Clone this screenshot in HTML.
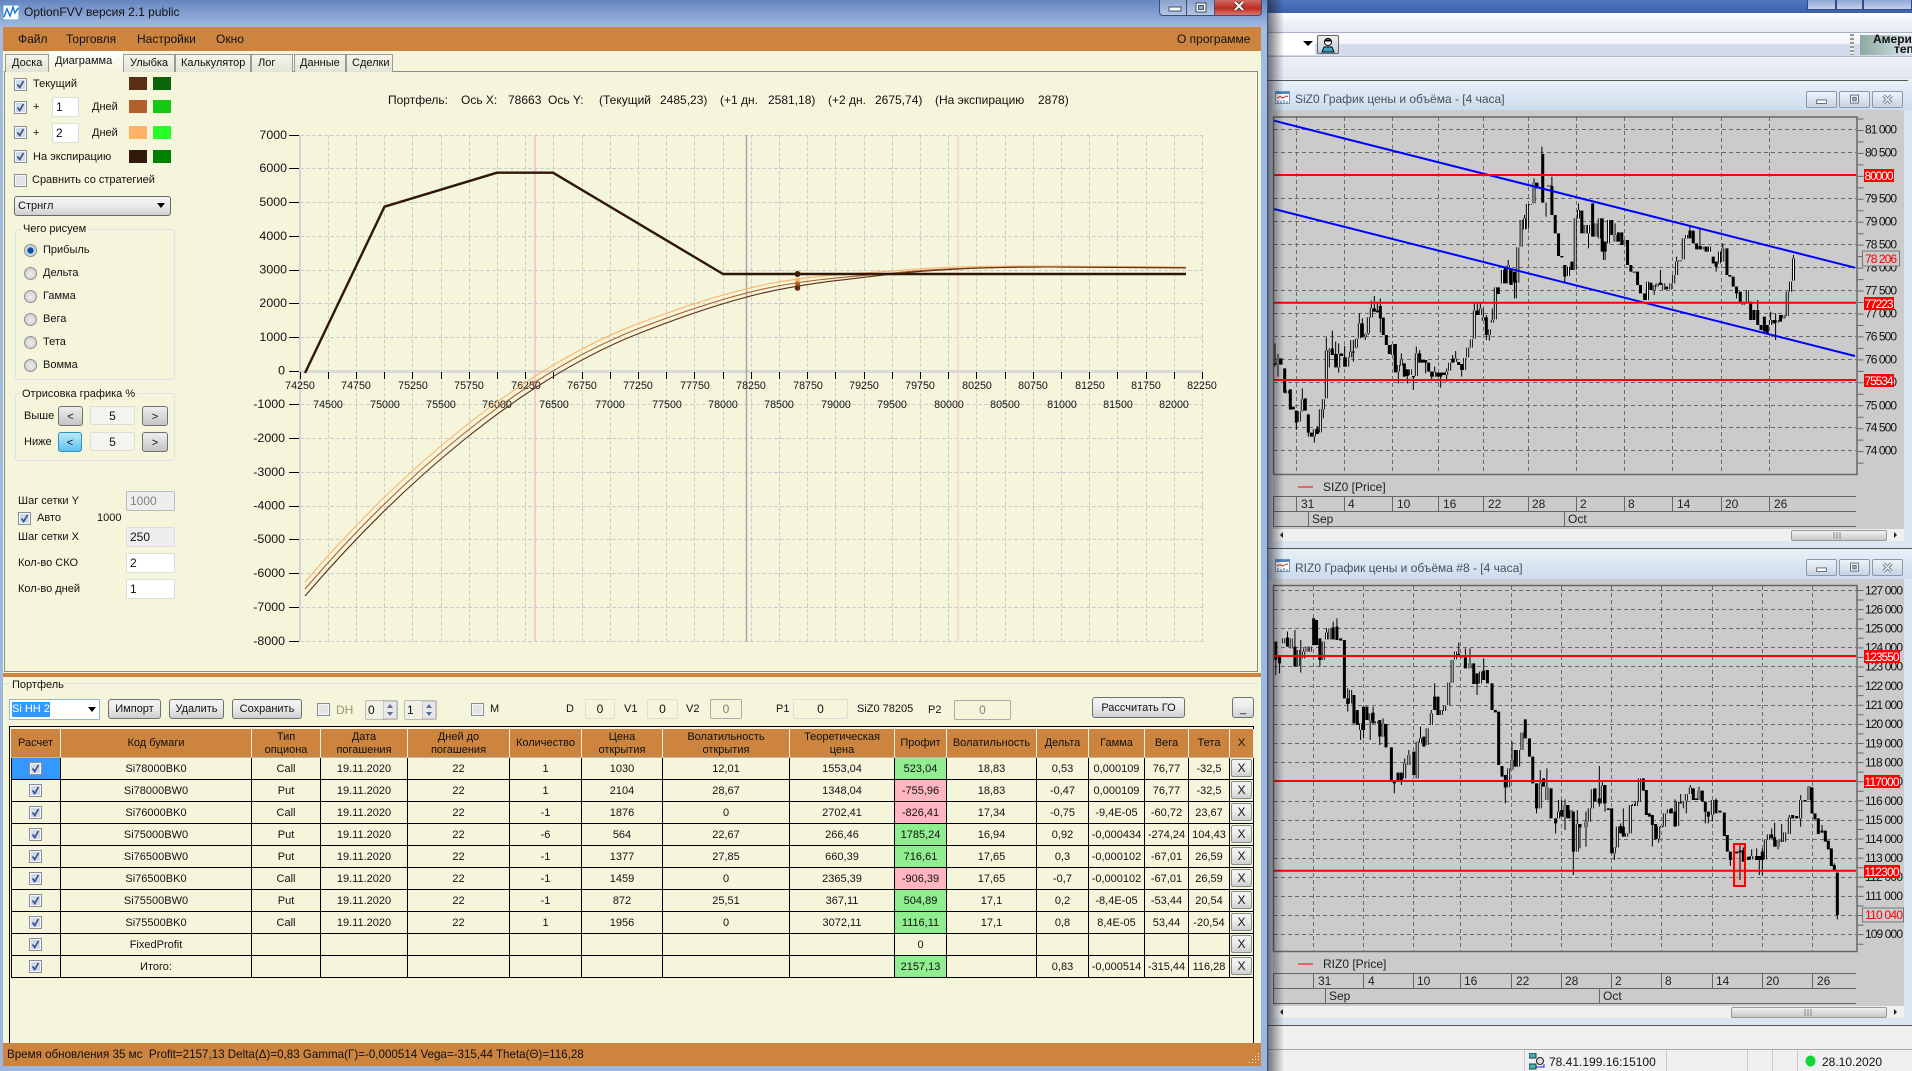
<!DOCTYPE html>
<html lang="ru"><head><meta charset="utf-8"><title>OptionFVV</title>
<style>
html,body{margin:0;padding:0;background:#e8ecf4}
body{width:1912px;height:1071px;position:relative;overflow:hidden;font:11px/14px "Liberation Sans","Noto Sans CJK SC",sans-serif;color:#111}
div,span,svg.p{position:absolute}
.t{position:absolute;white-space:pre;line-height:14px}
.m{font-size:12px}
.tab{position:absolute;top:54px;line-height:16px;text-align:left;background:linear-gradient(#f4f4ea,#e4e4d6);border:1px solid #9a9a9a;border-bottom:0;box-sizing:border-box;height:18px;font-size:11px;padding-left:6px;white-space:pre}
.cb{position:absolute;width:13px;height:13px}
.sw{position:absolute;width:18px;height:13px}
.r{position:absolute;width:11px;height:11px;border-radius:50%;border:1px solid #8e8e8e;background:radial-gradient(circle at 50% 55%,#eee,#c6c6c6)}
.r.on{background:radial-gradient(circle,#0f4f9c 0 2.6px,#9fc4e6 3.4px,#ddd 4.5px,#c8c8c8)}
.in{position:absolute;box-sizing:border-box;height:20px;background:#fff;border:1px solid #dcdcd8;border-radius:2px;padding-left:3px;line-height:18px;font-size:12px}
.in.c{text-align:center;padding:0}
.bt{position:absolute;box-sizing:border-box;background:linear-gradient(#f4f4f4 0,#ececec 45%,#cfcfcf 100%);border:1px solid #707070;border-radius:3px;text-align:center;font-size:11px}
.grp{position:absolute;box-sizing:border-box;border:1px solid #dde2e6;border-radius:3px}
.lg{position:absolute;background:#f5f5dc;padding:0 2px;white-space:pre;line-height:14px}
table{border-collapse:separate;border-spacing:0;table-layout:fixed;position:absolute;left:11px;top:729px;width:1243px;font-size:11px;text-align:center}
th{background:#cc843f;font-weight:400;height:27px;padding:1px 0 0;box-sizing:content-box;line-height:13px;border-right:1px solid #f3efe0;border-bottom:1px solid #b9b9a8;font-size:11px}
td{height:21px;padding:0;border-right:1px solid #000;border-bottom:1px solid #000;line-height:20px;position:relative;white-space:nowrap;overflow:hidden}
tr td:first-child{border-left:1px solid #000}
.g{background:#90ee90}.k{background:#ffb6c1}
.cc svg{position:absolute;left:17px;top:4px;width:13px;height:13px}
.xb{position:absolute;left:1px;top:1px;width:21px;height:18px;box-sizing:border-box;line-height:16px;background:linear-gradient(#f4f4f4,#ececec 45%,#cfcfcf);border:1px solid #8a8a8a;border-radius:2px;font-size:12px}
.wb{position:absolute;box-sizing:border-box;width:31px;height:17px;background:linear-gradient(#eef3f9,#c6d4e5);border:1px solid #8b98aa;border-radius:2px}
.wb svg{position:absolute;left:0;top:0}
.wt{position:absolute;white-space:pre;font-size:12px;color:#46505e;line-height:14px}
svg text{font-family:"Liberation Sans",sans-serif}
.vs{vector-effect:non-scaling-stroke}
</style></head><body>
<svg width="0" height="0" style="position:absolute"><defs>
<symbol id="ck" viewBox="0 0 13 13"><rect x=".5" y=".5" width="12" height="12" fill="#f4f6f9" stroke="#8a8e94"/><rect x="2" y="2" width="9" height="9" fill="#cfd9e8"/><path d="M3.5 6.5l2.2 3 3.8-6.5" fill="none" stroke="#39508f" stroke-width="1.7"/></symbol>
<symbol id="ce" viewBox="0 0 13 13"><rect x=".5" y=".5" width="12" height="12" fill="#f4f6f9" stroke="#8a8e94"/><rect x="2" y="2" width="9" height="9" fill="#e2e4e6"/></symbol>
<symbol id="mn" viewBox="0 0 31 17"><rect x="10" y="9" width="11" height="4" fill="#fff" stroke="#55606e"/></symbol>
<symbol id="mx" viewBox="0 0 31 17"><rect x="11" y="3.5" width="9" height="9" fill="#fff" stroke="#55606e"/><rect x="13.5" y="6" width="4" height="4" fill="#9fb0c4" stroke="#55606e"/></symbol>
<symbol id="cl" viewBox="0 0 31 17"><path d="M11 4l9 9M20 4l-9 9" stroke="#55606e" stroke-width="3.4"/><path d="M11 4l9 9M20 4l-9 9" stroke="#fff" stroke-width="1.6"/></symbol>
<symbol id="wi" viewBox="0 0 15 13"><rect x=".5" y=".5" width="14" height="12" fill="#fff" stroke="#6f93bb"/><rect x="1" y="1" width="13" height="2" fill="#4f86c0"/><path d="M2 7l3-1.5 3 1.5 3-2 2 .5" fill="none" stroke="#d03030"/><path d="M3 12V9M6 12V10M9 12V9M12 12V10" stroke="#3f6f9f"/></symbol>
<path id="w1" class="vs" d="M24 235V252M52 332V340M88 394V425M97 358V392M133 448V470M151 388V457M160 358V388M169 212V355M178 212V215M206 222V262M233 232V260M242 215V232M259 177V203M268 130V175M286 163V170M295 112V160M304 85V112M367 193V225M385 255V275M394 238V257M421 268V285M439 220V288M494 275V290M530 275V285M539 248V272M557 236V246M584 234V270M593 203V232M604 178V203M613 92V176M631 85V105M640 112V122M658 148V165M667 120V128M676 22V118"/>
<path id="w2" class="vs" d="M583 810V850M597 795V850M620 742V848M628 660V740M636 655V688M643 612V686M650 612V615M659 548V610M695 555V560M742 800V828M758 655V810M766 630V655M782 675V700M790 675V700M808 670V710M816 655V715M838 660V730M854 705V725M878 720V735M932 845V900M948 855V870M955 850V860M971 850V870M988 850V868M995 825V850M1002 785V825M1010 780V785M1018 715V778M1026 705V715M1065 740V748M1081 740V755M1105 755V790M1113 745V785M1162 905V915M1172 870V905M1228 960V975M1244 960V968M1260 945V955M1268 875V948M1276 845V875M1283 775V842"/>
<path id="w3" class="vs" d="M57 265V280M75 265V295M92 300V348M105 305V325M113 290V305M121 290V305M152 275V330M160 248V268M168 235V268M218 420V460M242 520V540M265 490V512M280 515V520M296 520V560M348 640V685M358 615V645M378 575V685M386 565V578M402 535V585M412 490V525M436 480V495M444 468V483M454 398V465M462 330V398M470 305V328M505 340V355M530 365V400M598 655V712M606 630V660M622 600V650M630 548V600M674 700V775M690 712V750M718 785V805"/>
<path id="w4" class="vs" d="M15 255V292M33 270V295M52 312V395M78 305V322M88 265V305M97 208V265M127 198V250M163 382V400M172 320V382M200 340V350M211 255V340M220 252V258M229 243V258M238 175V245M296 320V355M304 318V322M313 280V320M325 268V280M353 245V318M379 222V242M391 202V222M417 212V240M457 240V285M575 408V418M616 360V418M625 343V360M654 360V380M674 337V365M688 292V342M722 240V295M747 200V240"/>
</defs></svg>

<!-- right application background -->
<div style="left:1262px;top:0;width:650px;height:1071px;background:#f0f0f0"></div>
<div style="left:1262px;top:0;width:650px;height:13px;background:linear-gradient(#5478bf,#3a60ad)"></div>
<div style="left:1262px;top:13px;width:650px;height:19px;background:linear-gradient(#fff 0,#f4f6fa 30%,#e4e8f3)"></div>
<div style="left:1262px;top:32px;width:650px;height:1px;background:#a9afc2"></div>
<div style="left:1262px;top:33px;width:650px;height:23px;background:linear-gradient(#fafbfd 0,#f2f4fa 45%,#d3daec 50%,#d3daec)"></div>
<div style="left:1262px;top:56px;width:650px;height:1px;background:#b6b8c0"></div>
<div style="left:1262px;top:57px;width:650px;height:22px;background:linear-gradient(#eef0f6,#e2e5f1)"></div>
<div style="left:1262px;top:34px;width:53px;height:21px;background:#fff"></div>
<svg class="p" style="left:1303px;top:41px" width="11" height="6"><path d="M0 0h10L5 5z" fill="#000"/></svg>
<div style="left:1317px;top:35px;width:22px;height:19px;box-sizing:border-box;background:linear-gradient(#eee,#c4cbdc);border:1px solid #666;border-radius:2px"></div>
<svg class="p" style="left:1320px;top:37px" width="16" height="16"><circle cx="8" cy="5" r="3.6" fill="#fff" stroke="#000"/><path d="M5 2.5h6v2H5z" fill="#000"/><path d="M2 15l2-5h8l2 5z" fill="#37a6c4" stroke="#000"/></svg>
<div style="left:1850px;top:34px;width:4px;height:21px;background:repeating-linear-gradient(#999 0 2px,#eee 2px 4px)"></div>
<div style="left:1860px;top:35px;width:52px;height:20px;background:linear-gradient(90deg,#8aa9a0,#bcd0d0 60%,#dfe6ee)"></div>
<span class="t" style="left:1873px;top:32px;font-weight:700;font-size:12px">Америк</span>
<span class="t" style="left:1894px;top:42px;font-weight:700;font-size:12px">теп</span>
<div style="left:1807px;top:0;width:29px;height:10px;background:linear-gradient(#8fa6d4,#c3d0e8);border:1px solid #2f4d8d;border-top:0;box-sizing:border-box"></div>
<div style="left:1836px;top:0;width:27px;height:10px;background:linear-gradient(#8fa6d4,#c3d0e8);border:1px solid #2f4d8d;border-top:0;box-sizing:border-box"></div>
<div style="left:1863px;top:0;width:49px;height:10px;background:linear-gradient(#8fa6d4,#c3d0e8);border:1px solid #2f4d8d;border-top:0;box-sizing:border-box"></div>

<!-- child window 1 -->
<div style="left:1268px;top:80px;width:644px;height:468px;background:#dae7f3;border-top:1px solid #555;box-sizing:border-box;border-radius:0 6px 0 0"></div>
<div style="left:1268px;top:81px;width:644px;height:29px;background:linear-gradient(#e9f0f7,#ccdcec)"></div>
<div style="left:1273px;top:110px;width:631px;height:419px;background:#cbcbcb"></div>
<div style="left:1273px;top:529px;width:631px;height:12px;background:#f0f0f0"></div>
<div style="left:1791px;top:530px;width:96px;height:11px;box-sizing:border-box;background:linear-gradient(#f2f2f2,#c9c9c9);border:1px solid #999;border-radius:2px"></div>
<svg class="p" style="left:1275px;top:91px" width="15" height="13"><use href="#wi"/></svg>
<span class="wt" style="left:1295px;top:92px">SiZ0 График цены и объёма - [4 часа]</span>
<div class="wb" style="left:1806px;top:91px"><svg width="29" height="15"><use href="#mn"/></svg></div>
<div class="wb" style="left:1839px;top:91px"><svg width="29" height="15"><use href="#mx"/></svg></div>
<div class="wb" style="left:1872px;top:91px"><svg width="29" height="15"><use href="#cl"/></svg></div>

<!-- child window 2 -->
<div style="left:1268px;top:548px;width:644px;height:477px;background:#dae7f3;border-top:1px solid #555;box-sizing:border-box"></div>
<div style="left:1268px;top:549px;width:644px;height:30px;background:linear-gradient(#e9f0f7,#ccdcec)"></div>
<div style="left:1273px;top:579px;width:631px;height:427px;background:#cbcbcb"></div>
<div style="left:1273px;top:1006px;width:631px;height:12px;background:#f0f0f0"></div>
<div style="left:1731px;top:1007px;width:156px;height:11px;box-sizing:border-box;background:linear-gradient(#f2f2f2,#c9c9c9);border:1px solid #999;border-radius:2px"></div>
<svg class="p" style="left:1275px;top:559px" width="15" height="13"><use href="#wi"/></svg>
<span class="wt" style="left:1295px;top:561px">RIZ0 График цены и объёма #8 - [4 часа]</span>
<div class="wb" style="left:1806px;top:559px"><svg width="29" height="15"><use href="#mn"/></svg></div>
<div class="wb" style="left:1839px;top:559px"><svg width="29" height="15"><use href="#mx"/></svg></div>
<div class="wb" style="left:1872px;top:559px"><svg width="29" height="15"><use href="#cl"/></svg></div>

<!-- bottom of right app -->
<div style="left:1268px;top:1025px;width:644px;height:1px;background:#555"></div>
<div style="left:1268px;top:1049px;width:644px;height:1px;background:#a8a8a8"></div>
<div style="left:1524px;top:1050px;width:1px;height:21px;background:#ccc"></div>
<div style="left:1666px;top:1050px;width:1px;height:21px;background:#ccc"></div>
<div style="left:1747px;top:1050px;width:1px;height:21px;background:#ccc"></div>
<div style="left:1772px;top:1050px;width:1px;height:21px;background:#ccc"></div>
<div style="left:1797px;top:1050px;width:1px;height:21px;background:#ccc"></div>
<svg class="p" style="left:1529px;top:1053px" width="16" height="17"><rect x="0" y="0" width="7" height="5" fill="#39b7a8" stroke="#234"/><rect x="0" y="11" width="7" height="5" fill="#39b7a8" stroke="#234"/><circle cx="11" cy="8" r="3.5" fill="#ddd" stroke="#222"/><path d="M7 14h8V11" fill="none" stroke="#22c"/></svg>
<span class="t" style="left:1549px;top:1055px;font-size:12px">78.41.199.16:15100</span>
<svg class="p" style="left:1805px;top:1055px" width="11" height="12"><ellipse cx="5.5" cy="6" rx="5" ry="5.5" fill="#0fd832"/></svg>
<span class="t" style="left:1822px;top:1055px;font-size:12px">28.10.2020</span>

<!-- charts -->
<svg class="p" style="left:0;top:0" width="1912" height="1071">
<g fill="none" stroke="#6a6a6a" stroke-dasharray="4 3">
<path d="M1274 129.5H1856M1274 152.5H1856M1274 175.5H1856M1274 198.5H1856M1274 221.5H1856M1274 244.5H1856M1274 267.5H1856M1274 290.5H1856M1274 313.5H1856M1274 336.5H1856M1274 359.5H1856M1274 382.5H1856M1274 405.5H1856M1274 427.5H1856M1274 450.5H1856"/>
<path d="M1296.5 117V474M1344.5 117V474M1392.5 117V474M1438.5 117V474M1483.5 117V474M1528.5 117V474M1576.5 117V474M1624.5 117V474M1672.5 117V474M1721.5 117V474M1769.5 117V474"/>
<path d="M1274 590.5H1856M1274 609.5H1856M1274 628.5H1856M1274 647.5H1856M1274 666.5H1856M1274 686.5H1856M1274 705.5H1856M1274 724.5H1856M1274 743.5H1856M1274 762.5H1856M1274 781.5H1856M1274 801.5H1856M1274 820.5H1856M1274 839.5H1856M1274 858.5H1856M1274 877.5H1856M1274 896.5H1856M1274 915.5H1856M1274 934.5H1856"/>
<path d="M1313.5 586V951M1363.5 586V951M1413.5 586V951M1460.5 586V951M1511.5 586V951M1561.5 586V951M1611.5 586V951M1661.5 586V951M1712.5 586V951M1762.5 586V951M1812.5 586V951"/>
</g>
<g fill="none" stroke="#666">
<path d="M1273.5 474.5V117H1857V474.5H1273.5" stroke-width="1.5"/>
<path d="M1273.5 951.5V585.5H1857V951.5H1273.5" stroke-width="1.5"/>
<path d="M1273 496.5H1856M1273 511.5H1856M1273 526.5H1856M1273.5 496V527M1296.5 497V511M1344.5 497V511M1392.5 497V511M1438.5 497V511M1483.5 497V511M1528.5 497V511M1576.5 497V511M1624.5 497V511M1672.5 497V511M1721.5 497V511M1769.5 497V511M1308.5 512V526M1564.5 512V526"/>
<path d="M1273 973.5H1856M1273 988.5H1856M1273 1003.5H1856M1273.5 973V1004M1313.5 974V988M1363.5 974V988M1413.5 974V988M1460.5 974V988M1511.5 974V988M1561.5 974V988M1611.5 974V988M1661.5 974V988M1712.5 974V988M1762.5 974V988M1812.5 974V988M1325.5 989V1003M1599.5 989V1003"/>
<path d="M1860 118V474" stroke-width="7" stroke-dasharray="1 10.47" stroke-dashoffset="-.5"/>
<path d="M1860 590V951" stroke-width="7" stroke-dasharray="1 8.56" stroke-dashoffset="0"/>
</g>

<rect x="1734" y="844" width="11" height="42" fill="#e8a0a0" fill-opacity=".55"/>

<!-- SiZ0 candles -->
<g fill="none" stroke="#000" transform="translate(1270 280) scale(.33333)">
<path class="vs" stroke-width="1" d="M15 190V260M24 222V290M44 265V340M61 328V390M79 392V450M97 325V395M115 403V470M133 448V488M142 438V462M160 358V415M169 172V355M178 205V262M187 152V225M197 185V262M206 190V278M224 198V260M242 180V232M250 180V245M259 175V205M268 100V175M277 115V172M286 160V180M295 112V165M304 62V112M313 48V95M322 65V97M331 55V158M340 113V165M367 193V225M376 192V277M385 255V310M394 220V257M403 250V290M412 268V310M430 288V330M439 200V288M449 210V248M467 240V280M485 275V300M494 260V290M512 278V323M530 265V305M548 225V248M557 213V246M575 252V290M613 70V176M622 70V105M631 70V105M640 85V122M649 105V180M658 148V182M667 85V128M739 0V55"/>
<path class="vs" stroke-width="3" d="M15 250V255M33 235V254M44 265V338M61 328V388M70 380V388M79 392V428M106 355V392M115 403V458M124 458V470M142 445V462M187 205V225M197 222V262M215 220V228M224 232V260M250 215V218M277 130V172M313 85V95M322 92V97M331 78V115M340 113V165M349 165V195M358 195V222M376 192V277M403 250V290M412 268V288M430 288V292M449 220V248M458 240V248M467 240V248M476 248V275M485 275V290M503 278V290M512 278V290M521 278V285M548 236V248M566 246V255M575 252V270M622 92V105M649 112V165M685 22V42"/>
<use href="#w1" stroke-width="3"/><use href="#w1" stroke="#fff" stroke-width="1"/>
</g>
<g fill="none" stroke="#000" transform="translate(1260 0) scale(.4158 .33333)">
<path class="vs" stroke-width="1" d="M597 780V850M612 815V895M636 645V688M659 535V610M678 440V608M688 608V650M702 530V645M733 795V850M750 785V810M766 610V655M790 675V745M800 610V710M830 725V780M838 660V730M854 670V725M963 810V855M948 855V885M1002 770V825M1034 675V715M1058 685V748M1097 785V815M1113 730V785M1146 860V895M1197 900V975M1228 935V975M1240 940V1020M1283 765V842M826 755V780"/>
<path class="vs" stroke-width="3" d="M590 800V850M604 810V855M612 815V848M666 548V565M680 462V608M702 558V645M710 645V700M718 700V768M726 768V772M733 795V830M750 785V810M774 632V700M800 610V710M823 655V755M830 725V755M846 660V705M862 697V725M870 697V735M884 720V795M892 795V815M900 815V818M908 815V855M915 855V880M925 880V900M940 848V870M963 848V855M978 860V868M1034 692V715M1042 692V730M1050 730V748M1058 738V748M1073 740V755M1090 770V790M1097 785V800M1123 745V825M1130 825V830M1138 830V860M1146 860V880M1155 875V905M1180 905V960M1188 930V960M1197 930V975M1205 975V990M1213 950V995M1220 975V1000M1236 960V970M1252 945V965"/>
<use href="#w2" stroke-width="3"/><use href="#w2" stroke="#fff" stroke-width="1"/>
</g>
<!-- RIZ0 candles -->
<g fill="none" stroke="#000" transform="translate(1260 550) scale(.4158 .33333)">
<path class="vs" stroke-width="1" d="M38 275V375M47 315V370M66 245V290M84 240V350M98 270V368M105 295V325M144 265V350M160 235V268M176 215V268M185 205V270M211 415V485M242 520V570M265 490V570M272 470V520M288 510V585M296 505V560M323 695V730M340 668V705M348 625V685M358 600V645M386 530V578M412 480V525M420 400V480M478 278V318M494 295V355M505 295V355M522 370V435M538 325V390M590 675V760M606 575V660M665 700V790M674 660V775M690 655V750M711 805V850M718 750V805M129 205V285M226 435V520M249 470V565M303 522V592M316 592V695M378 575V685M402 535V585"/>
<path class="vs" stroke-width="3" d="M38 275V330M47 315V340M66 262V290M84 290V350M129 205V285M136 210V285M144 265V330M176 232V268M185 230V270M194 265V272M203 270V445M211 445V462M226 435V520M234 480V525M249 470V540M257 470V510M272 488V520M288 510V560M303 522V592M316 592V695M323 695V700M332 668V690M340 668V695M370 605V675M394 560V590M420 440V480M428 440V495M478 312V318M486 315V322M494 322V355M514 340V402M522 370V402M538 362V390M547 360V400M558 400V480M566 480V487M574 485V645M582 648V680M590 675V712M614 600V650M638 508V565M648 565V620M656 620V700M665 700V775M682 685V710M700 715V805M711 805V820"/>
<use href="#w3" stroke-width="3"/><use href="#w3" stroke="#fff" stroke-width="1"/>
</g>
<g fill="none" stroke="#000" transform="translate(1560 720) scale(.33333)">
<path class="vs" stroke-width="1" d="M5 240V290M15 238V330M40 275V465M52 270V395M60 312V385M78 275V380M118 138V260M127 180V250M135 195V275M163 382V420M182 310V340M190 265V350M277 285V380M296 320V368M345 238V320M353 245V318M362 222V250M370 245V265M379 222V280M391 195V222M417 200V240M436 245V310M445 275V310M457 240V305M468 235V280M511 395V438M540 372V480M550 382V425M575 388V418M590 385V420M598 408V465M607 385V465M635 325V355M644 308V380M654 360V388M665 312V365M688 285V342M722 225V320M747 198V240M786 315V338M823 430V450M832 458V598"/>
<path class="vs" stroke-width="3" d="M5 270V290M24 255V295M40 275V395M60 312V322M105 205V245M118 235V250M135 195V250M145 265V270M155 265V400M182 318V340M190 320V350M250 175V212M259 210V285M268 280V290M277 285V315M287 312V358M334 265V280M345 275V320M362 247V250M400 205V240M408 235V240M427 212V245M436 245V275M445 275V290M468 240V280M480 272V278M493 278V348M502 345V395M511 395V420M530 395V400M540 392V397M550 390V425M566 410V420M590 408V420M598 408V420M607 395V420M635 343V355M644 352V380M665 362V365M698 285V295M710 288V295M735 240V245M756 202V280M765 280V298M775 295V342M786 332V338M796 332V365M805 362V388M814 385V438M823 435V450M832 458V585"/>
<use href="#w4" stroke-width="3"/><use href="#w4" stroke="#fff" stroke-width="1"/>
</g>

<!-- trend & level lines -->
<g fill="none">
<path d="M1274 120.7L1855 267.7M1274 209L1855 356" stroke="#0000ff" stroke-width="2"/>
<path d="M1274 175H1856M1274 302.8H1856M1274 380H1856M1274 656H1856M1274 781H1856M1274 870.8H1856" stroke="#ff0000" stroke-width="2"/>
<rect x="1734" y="844" width="11" height="42" stroke="#f00" stroke-width="2"/>
<path d="M1298 487H1313M1298 964H1313" stroke="#f00"/>
</g>
<!-- scale labels -->
<g font-size="12" fill="#111">
<text x="1865" y="133.5" textLength="32">81 000</text><text x="1865" y="156.5" textLength="32">80 500</text><text x="1865" y="202.5" textLength="32">79 500</text><text x="1865" y="225.5" textLength="32">79 000</text><text x="1865" y="248.5" textLength="32">78 500</text><text x="1865" y="271.5" textLength="32">78 000</text><text x="1865" y="294.5" textLength="32">77 500</text><text x="1865" y="317.5" textLength="32">77 000</text><text x="1865" y="340.5" textLength="32">76 500</text><text x="1865" y="363.5" textLength="32">76 000</text><text x="1865" y="386" textLength="32">75 500</text><text x="1865" y="409.5" textLength="32">75 000</text><text x="1865" y="431.5" textLength="32">74 500</text><text x="1865" y="454.5" textLength="32">74 000</text>
<text x="1865" y="594.5" textLength="38">127 000</text><text x="1865" y="613.5" textLength="38">126 000</text><text x="1865" y="632.5" textLength="38">125 000</text><text x="1865" y="651.5" textLength="38">124 000</text><text x="1865" y="670.5" textLength="38">123 000</text><text x="1865" y="690" textLength="38">122 000</text><text x="1865" y="709" textLength="38">121 000</text><text x="1865" y="728" textLength="38">120 000</text><text x="1865" y="747.5" textLength="38">119 000</text><text x="1865" y="766.5" textLength="38">118 000</text><text x="1865" y="785.5" textLength="38">117 000</text><text x="1865" y="805" textLength="38">116 000</text><text x="1865" y="824" textLength="38">115 000</text><text x="1865" y="843" textLength="38">114 000</text><text x="1865" y="862" textLength="38">113 000</text><text x="1865" y="881" textLength="38">112 000</text><text x="1865" y="900" textLength="38">111 000</text><text x="1865" y="919" textLength="38">110 000</text><text x="1865" y="938" textLength="38">109 000</text>
</g>
<g font-size="12">
<rect x="1864" y="169" width="30" height="13" fill="#f00"/><text x="1864.5" y="180" fill="#fff" textLength="29">80000</text>
<rect x="1864" y="297" width="30" height="13" fill="#f00"/><text x="1864.5" y="308" fill="#fff" textLength="29">77223</text>
<rect x="1864" y="374" width="30" height="13" fill="#f00"/><text x="1864.5" y="385" fill="#fff" textLength="29">75534</text>
<rect x="1862.5" y="251" width="37" height="15" fill="#cbcbcb" stroke="#777"/><text x="1865" y="263" fill="#f00" textLength="32">78 206</text>
<rect x="1864" y="650" width="36" height="13" fill="#f00"/><text x="1864.5" y="661" fill="#fff" textLength="35">123550</text>
<rect x="1864" y="775" width="36" height="13" fill="#f00"/><text x="1864.5" y="786" fill="#fff" textLength="35">117000</text>
<rect x="1864" y="865" width="36" height="13" fill="#f00"/><text x="1864.5" y="876" fill="#fff" textLength="35">112300</text>
<rect x="1862.5" y="908" width="41" height="14" fill="#cbcbcb" stroke="#777"/><text x="1865" y="919" fill="#f00" textLength="38">110 040</text>
</g>
<!-- date labels -->
<g font-size="12" fill="#222">
<text x="1323" y="491">SIZ0 [Price]</text>
<text x="1301" y="508">31</text><text x="1348" y="508">4</text><text x="1397" y="508">10</text><text x="1443" y="508">16</text><text x="1488" y="508">22</text><text x="1532" y="508">28</text><text x="1580" y="508">2</text><text x="1628" y="508">8</text><text x="1677" y="508">14</text><text x="1725" y="508">20</text><text x="1774" y="508">26</text>
<text x="1312" y="523">Sep</text><text x="1568" y="523">Oct</text>
<text x="1323" y="968">RIZ0 [Price]</text>
<text x="1318" y="985">31</text><text x="1368" y="985">4</text><text x="1417" y="985">10</text><text x="1464" y="985">16</text><text x="1516" y="985">22</text><text x="1565" y="985">28</text><text x="1615" y="985">2</text><text x="1665" y="985">8</text><text x="1716" y="985">14</text><text x="1766" y="985">20</text><text x="1817" y="985">26</text>
<text x="1329" y="1000">Sep</text><text x="1603" y="1000">Oct</text>
</g>
<g fill="#222"><path d="M1283 532v6l-3-3zM1894 532v6l3-3zM1283 1009v6l-3-3zM1894 1009v6l3-3z"/></g>
<path d="M1834 532v7M1837 532v7M1840 532v7M1805 1009v7M1808 1009v7M1811 1009v7" stroke="#888"/>
</svg>

<!-- shadow of main window -->
<div style="left:1268px;top:0;width:16px;height:1071px;background:linear-gradient(90deg,rgba(30,30,40,.6),rgba(30,30,40,0))"></div>

<!-- main window -->
<div style="left:0;top:0;width:1268px;height:1071px;background:linear-gradient(#6585bf 0,#8ea8d6 18px,#a4bbe0 28px,#9db6dd 100%);box-shadow:inset -1px 0 0 #34507f"></div>
<svg class="p" style="left:3px;top:5px" width="16" height="15"><rect width="16" height="15" fill="#fff" stroke="#3aa0e0"/><path d="M1 12l3-8 3 7 3-9 2 6 3-5" fill="none" stroke="#1477c8" stroke-width="1.4"/></svg>
<span class="t" style="left:24px;top:5px;font-size:12px;color:#111">OptionFVV версия 2.1 public</span>
<div style="left:1159px;top:0;width:28px;height:16px;background:linear-gradient(#8aa2cd,#b4c6e2);border:1px solid #3d506f;border-top:0;box-sizing:border-box;border-radius:0 0 0 4px"></div>
<div style="left:1187px;top:0;width:28px;height:16px;background:linear-gradient(#8aa2cd,#b4c6e2);border:1px solid #3d506f;border-top:0;border-left:0;box-sizing:border-box"></div>
<div style="left:1215px;top:0;width:47px;height:16px;background:linear-gradient(#d06c62,#c02a20 55%,#d8776f);border:1px solid #3d506f;border-top:0;border-left:0;box-sizing:border-box;border-radius:0 0 4px 0"></div>
<svg class="p" style="left:1159px;top:0" width="103" height="16"><rect x="10" y="7" width="12" height="4" fill="#fff" stroke="#3d4d66"/><rect x="37" y="3" width="10" height="9" fill="#fff" stroke="#3d4d66"/><rect x="39.5" y="5.5" width="5" height="4" fill="#97a9c4" stroke="#3d4d66"/><path d="M76 2l8 8M84 2l-8 8" stroke="#4a2a2a" stroke-width="3.6"/><path d="M76 2l8 8M84 2l-8 8" stroke="#fff" stroke-width="2"/></svg>

<div style="left:3px;top:27px;width:1258px;height:1039px;background:#f5f5dc"></div>
<div style="left:3px;top:27px;width:1258px;height:24px;background:#cc843f"></div>
<span class="t m" style="left:18px;top:32px">Файл</span>
<span class="t m" style="left:66px;top:32px">Торговля</span>
<span class="t m" style="left:137px;top:32px">Настройки</span>
<span class="t m" style="left:216px;top:32px">Окно</span>
<span class="t m" style="left:1177px;top:32px">О программе</span>

<!-- tab page -->
<div style="left:4px;top:71px;width:1254px;height:601px;box-sizing:border-box;border:1px solid #8c8c8c"></div>
<div class="tab" style="left:5px;width:44px">Доска</div>
<div class="tab" style="left:49px;top:51px;height:21px;width:74px;line-height:20px;background:linear-gradient(#fff,#f5f5dc);border:0">Диаграмма</div>
<div class="tab" style="left:123px;width:52px">Улыбка</div>
<div class="tab" style="left:175px;width:76px;padding-left:5px">Калькулятор</div>
<div class="tab" style="left:251px;width:42px">Лог</div>
<div class="tab" style="left:294px;width:52px;padding-left:5px">Данные</div>
<div class="tab" style="left:346px;width:47px;padding-left:5px">Сделки</div>

<!-- left settings -->
<svg class="cb" style="left:14px;top:78px"><use href="#ck"/></svg><span class="t" style="left:33px;top:77px">Текущий</span>
<div class="sw" style="left:129px;top:77px;background:#5c2e14"></div><div class="sw" style="left:153px;top:77px;background:#0a640a"></div>
<svg class="cb" style="left:14px;top:101px"><use href="#ck"/></svg><span class="t" style="left:33px;top:100px">+</span>
<div class="in" style="left:52px;top:97px;width:27px">1</div><span class="t" style="left:92px;top:100px">Дней</span>
<div class="sw" style="left:129px;top:100px;background:#b0602a"></div><div class="sw" style="left:153px;top:100px;background:#14c814"></div>
<svg class="cb" style="left:14px;top:126px"><use href="#ck"/></svg><span class="t" style="left:33px;top:126px">+</span>
<div class="in" style="left:52px;top:123px;width:27px">2</div><span class="t" style="left:92px;top:126px">Дней</span>
<div class="sw" style="left:129px;top:126px;background:#ffb366"></div><div class="sw" style="left:153px;top:126px;background:#28ff28"></div>
<svg class="cb" style="left:14px;top:150px"><use href="#ck"/></svg><span class="t" style="left:33px;top:150px">На экспирацию</span>
<div class="sw" style="left:129px;top:150px;background:#331a08"></div><div class="sw" style="left:153px;top:150px;background:#008000"></div>
<svg class="cb" style="left:14px;top:174px"><use href="#ce"/></svg><span class="t" style="left:32px;top:173px">Сравнить со стратегией</span>
<div class="bt" style="left:14px;top:196px;width:157px;height:20px;text-align:left;padding-left:3px;line-height:18px;border-color:#6a6a6a">Стрнгл</div>
<svg class="p" style="left:157px;top:203px" width="9" height="6"><path d="M0 0h8L4 5z" fill="#000"/></svg>

<div class="grp" style="left:15px;top:229px;width:160px;height:151px"></div>
<span class="lg" style="left:21px;top:222px">Чего рисуем</span>
<div class="r on" style="left:24px;top:244px"></div><span class="t" style="left:43px;top:243px">Прибыль</span>
<div class="r" style="left:24px;top:267px"></div><span class="t" style="left:43px;top:266px">Дельта</span>
<div class="r" style="left:24px;top:290px"></div><span class="t" style="left:43px;top:289px">Гамма</span>
<div class="r" style="left:24px;top:313px"></div><span class="t" style="left:43px;top:312px">Вега</span>
<div class="r" style="left:24px;top:336px"></div><span class="t" style="left:43px;top:335px">Тета</span>
<div class="r" style="left:24px;top:359px"></div><span class="t" style="left:43px;top:358px">Вомма</span>

<div class="grp" style="left:15px;top:393px;width:160px;height:68px"></div>
<span class="lg" style="left:20px;top:387px">Отрисовка графика %</span>
<span class="t" style="left:24px;top:409px">Выше</span>
<div class="bt" style="left:58px;top:406px;width:25px;height:20px;line-height:20px;background:linear-gradient(#eee,#c4c4c4)">&lt;</div>
<div class="in c" style="left:90px;top:406px;width:45px;height:19px;background:#f4f4f0">5</div>
<div class="bt" style="left:142px;top:406px;width:26px;height:20px;line-height:20px;background:linear-gradient(#eee,#c4c4c4)">&gt;</div>
<span class="t" style="left:24px;top:435px">Ниже</span>
<div class="bt" style="left:58px;top:432px;width:24px;height:20px;line-height:20px;background:linear-gradient(#bfe8fb,#5cc0ee);border-color:#2b8fc0">&lt;</div>
<div class="in c" style="left:90px;top:432px;width:45px;height:19px;background:#f4f4f0">5</div>
<div class="bt" style="left:142px;top:432px;width:26px;height:20px;line-height:20px;background:linear-gradient(#eee,#c4c4c4)">&gt;</div>

<span class="t" style="left:18px;top:494px">Шаг сетки Y</span>
<div class="in" style="left:126px;top:491px;width:49px;background:#eee;color:#808080;border-color:#bbb">1000</div>
<svg class="cb" style="left:18px;top:512px"><use href="#ck"/></svg><span class="t" style="left:37px;top:511px">Авто</span><span class="t" style="left:97px;top:511px">1000</span>
<span class="t" style="left:18px;top:530px">Шаг сетки X</span>
<div class="in" style="left:126px;top:527px;width:49px;background:#eee;border-color:#ddd">250</div>
<span class="t" style="left:18px;top:556px">Кол-во СКО</span>
<div class="in" style="left:126px;top:553px;width:49px">2</div>
<span class="t" style="left:18px;top:582px">Кол-во дней</span>
<div class="in" style="left:126px;top:579px;width:49px">1</div>

<!-- diagram title -->
<span class="t m" style="left:388px;top:93px">Портфель:</span>
<span class="t m" style="left:461px;top:93px">Ось X:</span>
<span class="t m" style="left:508px;top:93px">78663</span>
<span class="t m" style="left:548px;top:93px">Ось Y:</span>
<span class="t m" style="left:599px;top:93px">(Текущий</span>
<span class="t m" style="left:660px;top:93px">2485,23)</span>
<span class="t m" style="left:720px;top:93px">(+1 дн.</span>
<span class="t m" style="left:768px;top:93px">2581,18)</span>
<span class="t m" style="left:828px;top:93px">(+2 дн.</span>
<span class="t m" style="left:875px;top:93px">2675,74)</span>
<span class="t m" style="left:935px;top:93px">(На экспирацию</span>
<span class="t m" style="left:1038px;top:93px">2878)</span>

<!-- main diagram -->
<svg class="p" style="left:0;top:0" width="1268" height="680">
<path fill="none" stroke="#cdcdcd" stroke-dasharray="4 2" d="M328.5 135V642M356.5 135V642M384.5 135V642M412.5 135V642M441.5 135V642M469.5 135V642M497.5 135V642M525.5 135V642M553.5 135V642M582.5 135V642M610.5 135V642M638.5 135V642M666.5 135V642M694.5 135V642M723.5 135V642M751.5 135V642M779.5 135V642M807.5 135V642M835.5 135V642M864.5 135V642M892.5 135V642M920.5 135V642M948.5 135V642M976.5 135V642M1005.5 135V642M1033.5 135V642M1061.5 135V642M1089.5 135V642M1117.5 135V642M1146.5 135V642M1174.5 135V642M1202.5 135V642"/>
<path fill="none" stroke="#cdcdcd" stroke-dasharray="4 2" d="M300 135.5H1203M300 168.5H1203M300 202.5H1203M300 236.5H1203M300 270.5H1203M300 303.5H1203M300 337.5H1203M300 404.5H1203M300 438.5H1203M300 472.5H1203M300 506.5H1203M300 539.5H1203M300 573.5H1203M300 607.5H1203M300 641.5H1203"/>
<path d="M300 135V642" stroke="#d2d2d2" stroke-width="2"/>
<path d="M300 371.5H1203" stroke="#d8d8d8" stroke-width="3"/>
<path d="M535 135V642" stroke="#ffb8c4" stroke-width="1.5"/>
<path d="M958 135V642" stroke="#f8d0c8" stroke-width="1.5"/>
<path d="M746.5 135V642" stroke="#a8a8a8" stroke-width="1.5"/>
<path stroke="#000" d="M289 135.5H299M289 168.5H299M289 202.5H299M289 236.5H299M289 270.5H299M289 303.5H299M289 337.5H299M289 371.5H299M289 404.5H299M289 438.5H299M289 472.5H299M289 506.5H299M289 539.5H299M289 573.5H299M289 607.5H299M289 641.5H299"/>
<path stroke="#000" d="M300.5 372V379M328.5 372V379M356.5 372V379M384.5 372V379M412.5 372V379M441.5 372V379M469.5 372V379M497.5 372V379M525.5 372V379M553.5 372V379M582.5 372V379M610.5 372V379M638.5 372V379M666.5 372V379M694.5 372V379M723.5 372V379M751.5 372V379M779.5 372V379M807.5 372V379M835.5 372V379M864.5 372V379M892.5 372V379M920.5 372V379M948.5 372V379M976.5 372V379M1005.5 372V379M1033.5 372V379M1061.5 372V379M1089.5 372V379M1117.5 372V379M1146.5 372V379M1174.5 372V379M1202.5 372V379"/>
<g font-size="12.4" text-anchor="end" fill="#111">
<text x="287" y="139">7000</text><text x="287" y="172">6000</text><text x="287" y="206">5000</text><text x="287" y="240">4000</text><text x="287" y="273.5">3000</text><text x="287" y="307">2000</text><text x="287" y="341">1000</text><text x="285" y="374.5">0</text><text x="285" y="408">-1000</text><text x="285" y="442">-2000</text><text x="285" y="476">-3000</text><text x="285" y="509.5">-4000</text><text x="285" y="543">-5000</text><text x="285" y="577">-6000</text><text x="285" y="611">-7000</text><text x="285" y="645">-8000</text>
</g>
<g font-size="10.7" text-anchor="middle" fill="#111">
<text x="300" y="389">74250</text><text x="356" y="389">74750</text><text x="413" y="389">75250</text><text x="469" y="389">75750</text><text x="526" y="389">76250</text><text x="582" y="389">76750</text><text x="638" y="389">77250</text><text x="695" y="389">77750</text><text x="751" y="389">78250</text><text x="808" y="389">78750</text><text x="864" y="389">79250</text><text x="920" y="389">79750</text><text x="977" y="389">80250</text><text x="1033" y="389">80750</text><text x="1090" y="389">81250</text><text x="1146" y="389">81750</text><text x="1202" y="389">82250</text>
<text x="328" y="408">74500</text><text x="385" y="408">75000</text><text x="441" y="408">75500</text><text x="497" y="408">76000</text><text x="554" y="408">76500</text><text x="610" y="408">77000</text><text x="667" y="408">77500</text><text x="723" y="408">78000</text><text x="779" y="408">78500</text><text x="836" y="408">79000</text><text x="892" y="408">79500</text><text x="949" y="408">80000</text><text x="1005" y="408">80500</text><text x="1062" y="408">81000</text><text x="1118" y="408">81500</text><text x="1174" y="408">82000</text>
</g>
<g fill="none" stroke-linejoin="round">
<path stroke="#ffb366" stroke-width="1.1" d="M305 582C400 471 520 368 640 323C760 278 800 277 893 271C930 267 980 266 1048 266L1186 267"/>
<path stroke="#b0602a" stroke-width="1.1" d="M305 589C400 478 520 374 640 328C760 282 800 281 893 273C930 269 980 267 1048 267L1186 267.5"/>
<path stroke="#5c2e14" stroke-width="1.1" d="M305 596C400 485 520 380 640 333C760 286 800 285 893 274C930 270 980 267 1048 267L1186 268"/>
<path stroke="#2e1706" stroke-width="2.4" d="M305 373L384.5 206.7 497 172.7H553L723 274H1186"/>
</g>
<circle cx="797.5" cy="274" r="3" fill="#3a1c08"/><circle cx="797.5" cy="280" r="2.6" fill="#ffb366"/><circle cx="797.5" cy="284" r="2.6" fill="#b0602a"/><circle cx="797.5" cy="288" r="2.8" fill="#5c2e14"/>
</svg>

<!-- splitter -->
<div style="left:3px;top:673px;width:1258px;height:4px;background:#cc843f"></div>

<!-- portfolio toolbar -->
<div style="left:3px;top:683px;width:1255px;height:1px;background:#dde2e6"></div>
<span class="lg" style="left:10px;top:678px">Портфель</span>
<div style="left:9px;top:699px;width:91px;height:21px;box-sizing:border-box;background:#fff;border:1px solid #8fb6dc"></div>
<div style="left:12px;top:702px;width:38px;height:15px;background:#3399ff;color:#fff;line-height:15px;font-size:11px;white-space:pre">Si HH 2</div>
<svg class="p" style="left:88px;top:707px" width="9" height="6"><path d="M0 0h8L4 5z" fill="#000"/></svg>
<div class="bt" style="left:108px;top:699px;width:53px;height:20px;line-height:19px">Импорт</div>
<div class="bt" style="left:169px;top:699px;width:55px;height:20px;line-height:19px">Удалить</div>
<div class="bt" style="left:232px;top:699px;width:70px;height:20px;line-height:19px">Сохранить</div>
<svg class="cb" style="left:317px;top:703px"><use href="#ce"/></svg><span class="t" style="left:336px;top:703px;color:#9a9a6a;font-size:12px">DH</span>
<div class="in" style="left:365px;top:700px;width:33px;height:20px;background:#f0f0e4;border-color:#bbb;padding-left:2px">0</div>
<svg class="p" style="left:383px;top:701px" width="14" height="18"><rect width="14" height="18" fill="#e8e8e8" stroke="#aaa"/><path d="M4 7h6L7 3zM4 11h6l-3 4z" fill="#5a6fa0"/></svg>
<div class="in" style="left:404px;top:700px;width:33px;height:20px;background:#f0f0e4;border-color:#bbb;padding-left:2px">1</div>
<svg class="p" style="left:422px;top:701px" width="14" height="18"><rect width="14" height="18" fill="#e8e8e8" stroke="#aaa"/><path d="M4 7h6L7 3zM4 11h6l-3 4z" fill="#5a6fa0"/></svg>
<svg class="cb" style="left:471px;top:703px"><use href="#ce"/></svg><span class="t" style="left:490px;top:702px">M</span>
<span class="t" style="left:566px;top:702px">D</span><div class="in c" style="left:585px;top:699px;width:30px;background:#f5f5dc">0</div>
<span class="t" style="left:624px;top:702px">V1</span><div class="in c" style="left:647px;top:699px;width:31px;background:#f5f5dc">0</div>
<span class="t" style="left:686px;top:702px">V2</span><div class="in c" style="left:710px;top:699px;width:32px;background:#f5f5dc;color:#808080;border-color:#aaa">0</div>
<span class="t" style="left:776px;top:702px">P1</span><div class="in c" style="left:793px;top:699px;width:55px;background:#f5f5dc">0</div>
<span class="t" style="left:857px;top:702px">SiZ0 78205</span>
<span class="t" style="left:928px;top:703px">P2</span><div class="in c" style="left:954px;top:700px;width:57px;background:#f5f5dc;color:#808080;border-color:#aaa">0</div>
<div class="bt" style="left:1092px;top:697px;width:93px;height:21px;line-height:20px">Рассчитать ГО</div>
<div class="bt" style="left:1232px;top:697px;width:22px;height:21px;line-height:22px">_</div>

<!-- table frame -->
<div style="left:9px;top:726px;width:1245px;height:317px;box-sizing:border-box;border-top:1px solid #000;border-left:1px solid #000;border-right:1px solid #000"></div>
<table>
<colgroup><col style="width:50px"><col style="width:191px"><col style="width:69px"><col style="width:87px"><col style="width:102px"><col style="width:72px"><col style="width:81px"><col style="width:127px"><col style="width:105px"><col style="width:52px"><col style="width:90px"><col style="width:52px"><col style="width:56px"><col style="width:44px"><col style="width:41px"><col style="width:24px"></colgroup>
<tr><th>Расчет</th><th>Код бумаги</th><th>Тип<br>опциона</th><th>Дата<br>погашения</th><th>Дней до<br>погашения</th><th>Количество</th><th>Цена<br>открытия</th><th>Волатильность<br>открытия</th><th>Теоретическая<br>цена</th><th>Профит</th><th>Волатильность</th><th>Дельта</th><th>Гамма</th><th>Вега</th><th>Тета</th><th>X</th></tr>
<tr><td class="cc" style="background:#3399ff"><svg><use href="#ck"/></svg></td><td>Si78000BK0</td><td>Call</td><td>19.11.2020</td><td>22</td><td>1</td><td>1030</td><td>12,01</td><td>1553,04</td><td class="g">523,04</td><td>18,83</td><td>0,53</td><td>0,000109</td><td>76,77</td><td>-32,5</td><td><span class="xb">X</span></td></tr>
<tr><td class="cc"><svg><use href="#ck"/></svg></td><td>Si78000BW0</td><td>Put</td><td>19.11.2020</td><td>22</td><td>1</td><td>2104</td><td>28,67</td><td>1348,04</td><td class="k">-755,96</td><td>18,83</td><td>-0,47</td><td>0,000109</td><td>76,77</td><td>-32,5</td><td><span class="xb">X</span></td></tr>
<tr><td class="cc"><svg><use href="#ck"/></svg></td><td>Si76000BK0</td><td>Call</td><td>19.11.2020</td><td>22</td><td>-1</td><td>1876</td><td>0</td><td>2702,41</td><td class="k">-826,41</td><td>17,34</td><td>-0,75</td><td>-9,4E-05</td><td>-60,72</td><td>23,67</td><td><span class="xb">X</span></td></tr>
<tr><td class="cc"><svg><use href="#ck"/></svg></td><td>Si75000BW0</td><td>Put</td><td>19.11.2020</td><td>22</td><td>-6</td><td>564</td><td>22,67</td><td>266,46</td><td class="g">1785,24</td><td>16,94</td><td>0,92</td><td>-0,000434</td><td>-274,24</td><td>104,43</td><td><span class="xb">X</span></td></tr>
<tr><td class="cc"><svg><use href="#ck"/></svg></td><td>Si76500BW0</td><td>Put</td><td>19.11.2020</td><td>22</td><td>-1</td><td>1377</td><td>27,85</td><td>660,39</td><td class="g">716,61</td><td>17,65</td><td>0,3</td><td>-0,000102</td><td>-67,01</td><td>26,59</td><td><span class="xb">X</span></td></tr>
<tr><td class="cc"><svg><use href="#ck"/></svg></td><td>Si76500BK0</td><td>Call</td><td>19.11.2020</td><td>22</td><td>-1</td><td>1459</td><td>0</td><td>2365,39</td><td class="k">-906,39</td><td>17,65</td><td>-0,7</td><td>-0,000102</td><td>-67,01</td><td>26,59</td><td><span class="xb">X</span></td></tr>
<tr><td class="cc"><svg><use href="#ck"/></svg></td><td>Si75500BW0</td><td>Put</td><td>19.11.2020</td><td>22</td><td>-1</td><td>872</td><td>25,51</td><td>367,11</td><td class="g">504,89</td><td>17,1</td><td>0,2</td><td>-8,4E-05</td><td>-53,44</td><td>20,54</td><td><span class="xb">X</span></td></tr>
<tr><td class="cc"><svg><use href="#ck"/></svg></td><td>Si75500BK0</td><td>Call</td><td>19.11.2020</td><td>22</td><td>1</td><td>1956</td><td>0</td><td>3072,11</td><td class="g">1116,11</td><td>17,1</td><td>0,8</td><td>8,4E-05</td><td>53,44</td><td>-20,54</td><td><span class="xb">X</span></td></tr>
<tr><td class="cc"><svg><use href="#ck"/></svg></td><td>FixedProfit</td><td></td><td></td><td></td><td></td><td></td><td></td><td></td><td>0</td><td></td><td></td><td></td><td></td><td></td><td><span class="xb">X</span></td></tr>
<tr><td class="cc"><svg><use href="#ck"/></svg></td><td>Итого:</td><td></td><td></td><td></td><td></td><td></td><td></td><td></td><td class="g">2157,13</td><td></td><td>0,83</td><td>-0,000514</td><td>-315,44</td><td>116,28</td><td><span class="xb">X</span></td></tr>
</table>

<!-- status bar -->
<div style="left:3px;top:1043px;width:1258px;height:23px;background:#cc843f"></div>
<span class="t" style="left:7px;top:1048px;font-size:11.6px">Время обновления 35 мс  Profit=2157,13 Delta(Δ)=0,83 Gamma(Γ)=-0,000514 Vega=-315,44 Theta(Θ)=116,28</span>
<svg class="p" style="left:1248px;top:1052px" width="12" height="12"><path d="M10 1h1v1h-1zM7 4h1v1H7zM10 4h1v1h-1zM4 7h1v1H4zM7 7h1v1H7zM10 7h1v1h-1zM1 10h1v1H1zM4 10h1v1H4zM7 10h1v1h-1zM1 10h1v1H1z" fill="#f4f4f4"/></svg>
</body></html>
